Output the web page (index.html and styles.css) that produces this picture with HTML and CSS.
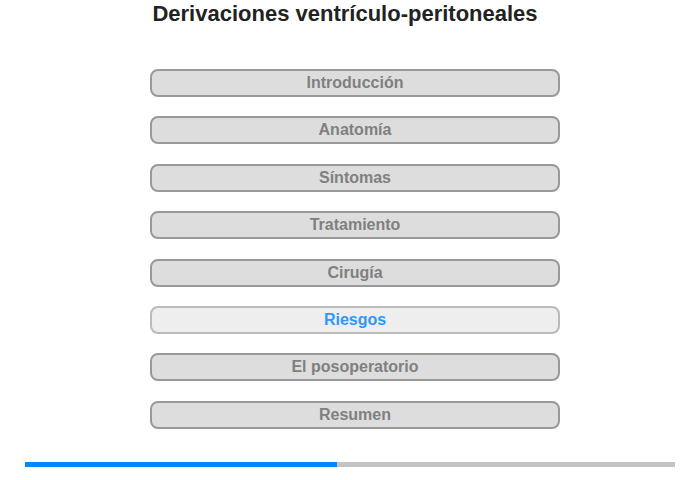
FILE: index.html
```html
<!DOCTYPE html>
<html lang="es">
<head>
<meta charset="utf-8">
<link rel="stylesheet" href="styles.css">
</head>
<body>
<div class="page">
  <h1 class="title">Derivaciones ventrículo-peritoneales</h1>
  <nav class="menu">
    <div class="item">Introducción</div>
    <div class="item">Anatomía</div>
    <div class="item">Síntomas</div>
    <div class="item">Tratamiento</div>
    <div class="item">Cirugía</div>
    <div class="item active">Riesgos</div>
    <div class="item">El posoperatorio</div>
    <div class="item">Resumen</div>
  </nav>
  <div class="progress"><div class="fill" style="width:48%"></div></div>
</div>
</body>
</html>
```
FILE: styles.css
```css
html, body { margin: 0; padding: 0; background: #fff; }
body { font-family: "Liberation Sans", Arial, sans-serif; }
.page { width: 700px; height: 480px; }
.title {
  margin: 0;
  padding-top: 1px;
  width: 690px;
  text-align: center;
  font-size: 22px;
  line-height: 25px;
  font-weight: bold;
  color: #222;
}
.menu {
  margin: 43px 0 0 150px;
  width: 410px;
  display: flex;
  flex-direction: column;
  gap: 19.4px;
}
.item {
  box-sizing: border-box;
  height: 28px;
  border: 2px solid #999;
  border-radius: 8px;
  background: #ddd;
  color: #808080;
  font-size: 16px;
  font-weight: bold;
  text-align: center;
  line-height: 24px;
}
.item.active {
  background: #eee;
  border-color: #bbb;
  color: #2c98ff;
}
.progress {
  margin: 33px 0 0 25px;
  width: 650px;
  height: 5px;
  background: #c4c4c4;
}
.fill { height: 100%; background: #0088ff; }
```
